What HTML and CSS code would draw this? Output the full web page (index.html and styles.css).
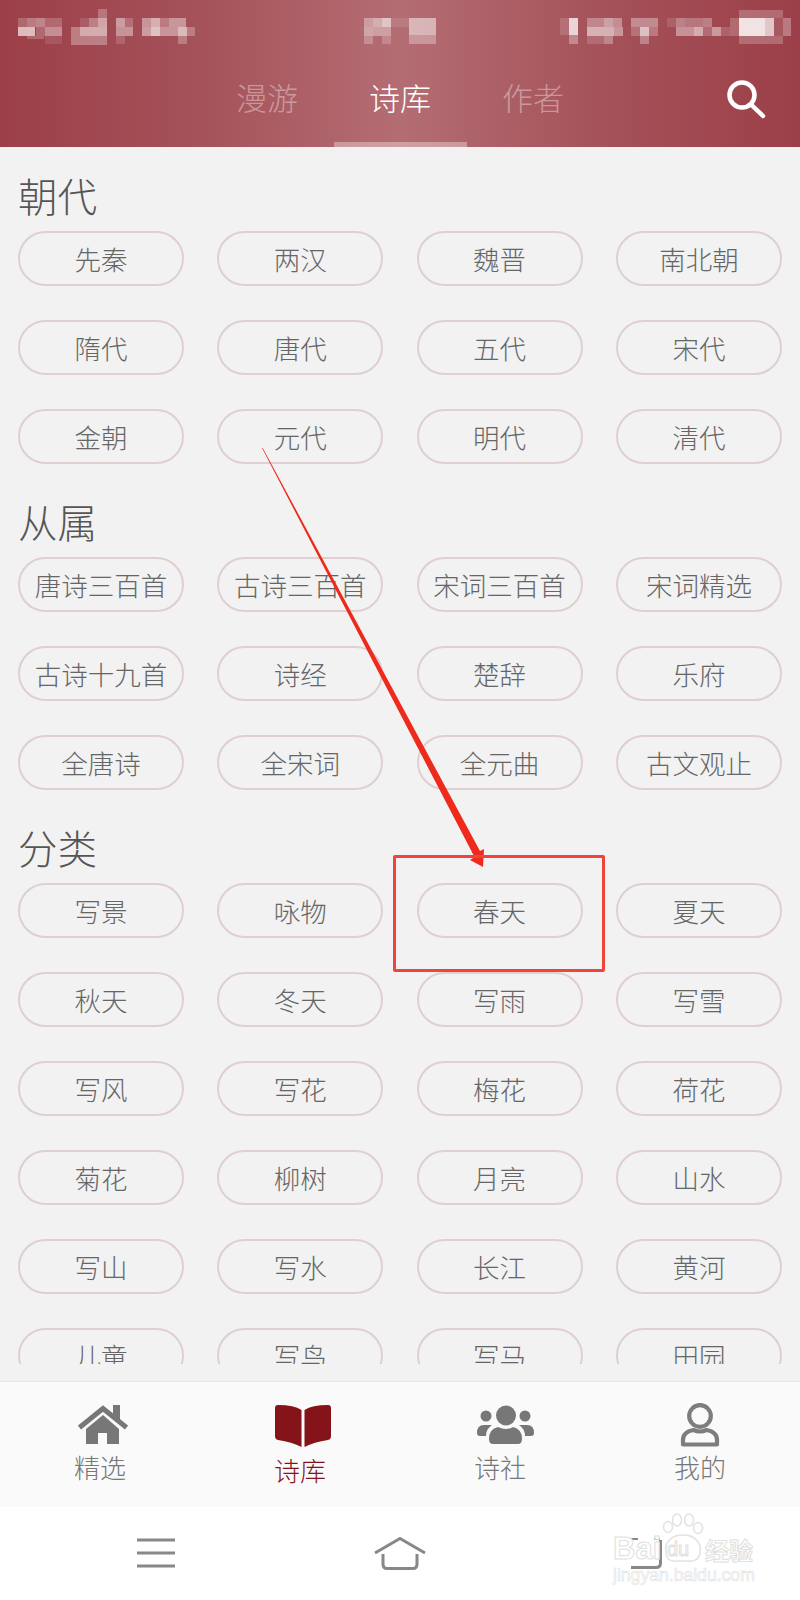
FILE: index.html
```html
<!DOCTYPE html>
<html>
<head>
    <meta charset="utf-8">
    <title>诗库</title>
    <link rel="stylesheet" href="styles.css">
</head>
<body>
    <div class="header">
        <!--状态栏（打码）-->
        <svg class="status" width="800" height="60" viewBox="0 0 800 60" fill="#fff">
            <rect x="18" y="18" width="9" height="9" opacity=".2"/><rect x="27" y="18" width="9" height="9" opacity=".3"/><rect x="36" y="18" width="9" height="9" opacity=".35"/><rect x="45" y="18" width="17" height="9" opacity=".2"/>
            <rect x="18" y="27" width="17" height="9" opacity=".65"/><rect x="36" y="27" width="9" height="9" opacity=".2"/><rect x="45" y="27" width="17" height="9" opacity=".4"/><rect x="27" y="36" width="17" height="3" opacity=".2"/><rect x="45" y="36" width="17" height="8" opacity=".1"/>
            <rect x="98" y="9" width="9" height="9" opacity=".25"/><rect x="89" y="18" width="9" height="9" opacity=".3"/><rect x="98" y="18" width="9" height="9" opacity=".5"/><rect x="80" y="18" width="9" height="9" opacity=".12"/>
            <rect x="71" y="27" width="9" height="9" opacity=".3"/><rect x="80" y="27" width="27" height="9" opacity=".55"/><rect x="71" y="36" width="36" height="9" opacity=".3"/>
            <rect x="116" y="18" width="9" height="9" opacity=".45"/><rect x="125" y="18" width="8" height="9" opacity=".2"/><rect x="116" y="27" width="17" height="9" opacity=".4"/><rect x="116" y="36" width="9" height="8" opacity=".15"/>
            <rect x="142" y="18" width="9" height="9" opacity=".4"/><rect x="151" y="18" width="9" height="9" opacity=".55"/><rect x="160" y="18" width="9" height="9" opacity=".25"/><rect x="169" y="18" width="17" height="9" opacity=".4"/>
            <rect x="142" y="27" width="9" height="9" opacity=".45"/><rect x="151" y="27" width="9" height="9" opacity=".65"/><rect x="160" y="27" width="18" height="9" opacity=".4"/><rect x="178" y="27" width="9" height="9" opacity=".6"/><rect x="187" y="27" width="8" height="9" opacity=".25"/><rect x="178" y="36" width="9" height="8" opacity=".25"/>

            <rect x="364" y="18" width="9" height="9" opacity=".35"/><rect x="373" y="18" width="9" height="9" opacity=".45"/><rect x="382" y="18" width="9" height="9" opacity=".6"/><rect x="364" y="27" width="9" height="9" opacity=".4"/><rect x="373" y="27" width="18" height="9" opacity=".35"/>
            <rect x="364" y="36" width="9" height="8" opacity=".25"/><rect x="382" y="36" width="9" height="8" opacity=".2"/><rect x="391" y="18" width="18" height="9" opacity=".1"/><rect x="409" y="18" width="27" height="17" opacity=".5"/><rect x="409" y="35" width="27" height="9" opacity=".3"/>

            <rect x="560" y="18" width="9" height="17" opacity=".15"/><rect x="569" y="18" width="9" height="17" opacity=".75"/><rect x="569" y="35" width="9" height="9" opacity=".3"/>
            <rect x="587" y="18" width="17" height="9" opacity=".3"/><rect x="604" y="18" width="9" height="9" opacity=".45"/><rect x="613" y="18" width="9" height="9" opacity=".35"/><rect x="587" y="27" width="27" height="9" opacity=".55"/><rect x="614" y="27" width="9" height="9" opacity=".4"/><rect x="587" y="36" width="17" height="8" opacity=".15"/><rect x="604" y="36" width="9" height="8" opacity=".3"/>
            <rect x="631" y="18" width="27" height="9" opacity=".35"/><rect x="631" y="27" width="9" height="9" opacity=".2"/><rect x="640" y="27" width="9" height="9" opacity=".65"/><rect x="649" y="27" width="9" height="9" opacity=".25"/><rect x="640" y="36" width="9" height="8" opacity=".3"/>
            <rect x="667" y="18" width="9" height="9" opacity=".12"/><rect x="676" y="18" width="9" height="9" opacity=".3"/><rect x="685" y="18" width="18" height="9" opacity=".25"/><rect x="703" y="18" width="9" height="9" opacity=".3"/>
            <rect x="676" y="27" width="18" height="9" opacity=".4"/><rect x="694" y="27" width="9" height="9" opacity=".55"/><rect x="703" y="27" width="9" height="9" opacity=".2"/><rect x="712" y="27" width="9" height="9" opacity=".45"/><rect x="721" y="27" width="9" height="9" opacity=".15"/>
            <rect x="730" y="18" width="9" height="18" opacity=".2"/><rect x="739" y="10" width="44" height="8" opacity=".22"/><rect x="739" y="18" width="26" height="18" opacity=".85"/><rect x="765" y="18" width="9" height="18" opacity=".7"/><rect x="774" y="18" width="9" height="18" opacity=".12"/><rect x="783" y="18" width="8" height="18" opacity=".3"/><rect x="739" y="36" width="44" height="8" opacity=".22"/>
        </svg>
        <div class="tabs">
            <div class="tab-list">
                <span class="tab">漫游</span>
                <span class="tab active">诗库</span>
                <span class="tab">作者</span>
            </div>
            <svg class="search" width="40" height="40" viewBox="0 0 40 40" fill="none" stroke="#fff" stroke-width="4.500">
                <circle cx="16" cy="15" r="12.500"/>
                <path d="M25 24.500 L37 36" stroke-linecap="round"/>
            </svg>
        </div>
    </div>

    <div class="content">
        <h2 class="title">朝代</h2>
        <div class="pills">
            <span class="pill">先秦</span><span class="pill">两汉</span><span class="pill">魏晋</span><span class="pill">南北朝</span>
            <span class="pill">隋代</span><span class="pill">唐代</span><span class="pill">五代</span><span class="pill">宋代</span>
            <span class="pill">金朝</span><span class="pill">元代</span><span class="pill">明代</span><span class="pill">清代</span>
        </div>
        <h2 class="title">从属</h2>
        <div class="pills">
            <span class="pill">唐诗三百首</span><span class="pill">古诗三百首</span><span class="pill">宋词三百首</span><span class="pill">宋词精选</span>
            <span class="pill">古诗十九首</span><span class="pill">诗经</span><span class="pill">楚辞</span><span class="pill">乐府</span>
            <span class="pill">全唐诗</span><span class="pill">全宋词</span><span class="pill">全元曲</span><span class="pill">古文观止</span>
        </div>
        <h2 class="title">分类</h2>
        <div class="pills">
            <span class="pill">写景</span><span class="pill">咏物</span><span class="pill">春天</span><span class="pill">夏天</span>
            <span class="pill">秋天</span><span class="pill">冬天</span><span class="pill">写雨</span><span class="pill">写雪</span>
            <span class="pill">写风</span><span class="pill">写花</span><span class="pill">梅花</span><span class="pill">荷花</span>
            <span class="pill">菊花</span><span class="pill">柳树</span><span class="pill">月亮</span><span class="pill">山水</span>
            <span class="pill">写山</span><span class="pill">写水</span><span class="pill">长江</span><span class="pill">黄河</span>
            <span class="pill">儿童</span><span class="pill">写鸟</span><span class="pill">写马</span><span class="pill">田园</span>
        </div>
    </div>

    <!--底部导航-->
    <div class="tabbar">
        <div class="nav-item">
            <svg class="nav-icon icon-home" width="50" height="44" viewBox="0 0 50 44" fill="#777">
                <rect x="35" y="0" width="7" height="14"/>
                <path d="M1.500 22.500 L25 3.500 L48.500 22.500" fill="none" stroke="#777" stroke-width="5"/>
                <path d="M8 24 L25 10 L41 24 V39 H29 V28 H20 V39 H8 Z"/>
            </svg>
            <span class="nav-label">精选</span>
        </div>
        <div class="nav-item active">
            <svg class="nav-icon icon-book" width="56" height="44" viewBox="0 0 56 44" fill="#85141a">
                <path d="M0 4 Q0 1 3 1 Q19 1 26.500 6 V43 Q17 38 3 36 Q0 35.500 0 32 Z"/>
                <path d="M56 4 Q56 1 53 1 Q37 1 29.500 6 V43 Q39 38 53 36 Q56 35.500 56 32 Z"/>
            </svg>
            <span class="nav-label">诗库</span>
        </div>
        <div class="nav-item">
            <svg class="nav-icon icon-people" width="57" height="44" viewBox="0 0 57 44" fill="#777">
                <circle cx="29" cy="10.500" r="10"/>
                <circle cx="9" cy="11" r="5.500"/>
                <circle cx="48" cy="11" r="5.500"/>
                <path d="M0 28 Q0 20 7 20 H15 Q9 24 9 31 H3 Q0 31 0 28 Z"/>
                <path d="M57 28 Q57 20 50 20 H42 Q48 24 48 31 H54 Q57 31 57 28 Z"/>
                <path d="M12 34 Q12 24 21 22 Q29 26 36 22 Q45 24 45 34 Q45 39 41 39 H16 Q12 39 12 34 Z"/>
            </svg>
            <span class="nav-label">诗社</span>
        </div>
        <div class="nav-item">
            <svg class="nav-icon icon-user" width="40" height="44" viewBox="0 0 40 44" fill="none" stroke="#7d7d7d" stroke-width="4.200">
                <circle cx="20" cy="13" r="10.800"/>
                <path d="M3 41.500 V37 C3 31 8 28 13.500 27 Q20 30 26.500 27 C32 28 37 31 37 37 V41.500 Z" stroke-linejoin="round"/>
            </svg>
            <span class="nav-label">我的</span>
        </div>
    </div>

    <!--系统导航-->
    <div class="sysnav">
        <svg width="38" height="32" viewBox="0 0 38 32" fill="none" stroke="#888" stroke-width="3">
            <path d="M0 3 H38 M0 16 H38 M0 29 H38"/>
        </svg>
        <svg class="sys-home" width="52" height="33" viewBox="0 0 52 33" fill="none" stroke="#888" stroke-width="3">
            <path d="M1 16 L26 1.500 L51 16"/>
            <path d="M9 17 V27 Q9 31.500 13 31.500 H39 Q43 31.500 43 27 V17"/>
        </svg>
        <svg width="32" height="32" viewBox="0 0 32 32" fill="none" stroke="#888" stroke-width="3">
            <path d="M30.500 3 V26 Q30.500 30.500 26 30.500 H1"/>
            <path d="M1 2 H8 M24 2 H30" stroke-width="2"/>
        </svg>
    </div>

    <!--图片上的标注-->
    <svg class="arrow" width="800" height="1600" viewBox="0 0 800 1600" fill="#ee2a1c">
        <path d="M262 448 L262.600 447.700 L480 851 L484 849 L483 867 L470 860 L474.500 857 Z"/>
    </svg>
    <div class="mark-box"></div>

    <!--水印-->
    <div class="watermark">
        <svg class="paw" width="44" height="52" viewBox="0 0 44 52" fill="#fff" stroke="#e2e2e2" stroke-width="1.500">
            <ellipse cx="7" cy="14" rx="4.500" ry="5.500"/>
            <ellipse cx="16" cy="7" rx="4.500" ry="6"/>
            <ellipse cx="28" cy="7" rx="4.500" ry="6"/>
            <ellipse cx="37" cy="15" rx="4.500" ry="5.500"/>
            <path d="M22 22 C34 22 41 30 39 40 C37 50 29 48 22 48 C14 48 6 50 5 40 C3 30 10 22 22 22 Z"/>
        </svg>
        <div class="wm-row">
            <span class="wm-bai">Bai</span>
            <span class="wm-du">du</span>
            <span class="wm-cn">经验</span>
        </div>
        <div class="wm-url">jingyan.baidu.com</div>
    </div>
</body>
</html>
```

FILE: styles.css
```css
body{
    margin:0;
    width:800px;
    height:1600px;
    overflow:hidden;
    position:relative;
    background-color:#f2f2f2;
    font-family:"Noto Sans CJK SC","Liberation Sans",sans-serif;
    font-weight:300;
}
/*顶部*/
.header{
    height:147px;
    display:flex;
    flex-direction:column;
    background:linear-gradient(90deg,#9c3f48 0%,#a5525a 25%,#b46d73 50%,#a5525a 75%,#9c3f48 100%);
}
.status{
    display:block;
    flex:none;
    filter:blur(.6px);
}
.tabs{
    flex:1;
    display:flex;
    justify-content:center;
    position:relative;
}
.tab-list{
    display:flex;
}
.tab{
    width:133px;
    box-sizing:border-box;
    padding-bottom:10px;
    display:flex;
    align-items:center;
    justify-content:center;
    font-size:31px;
    color:rgba(255,255,255,.38);
    border-bottom:5px solid transparent;
}
.tab.active{
    color:#fff;
    border-bottom-color:rgba(255,255,255,.35);
}
.search{
    position:absolute;
    right:34px;
    top:20px;
}
/*内容*/
.content{
    height:1217px;
    margin-bottom:18px;
    padding:22px 18px 0;
    box-sizing:border-box;
    overflow:hidden;
}
.title{
    margin:0 0 10px;
    height:52px;
    line-height:52px;
    font-size:39.500px;
    font-weight:300;
    color:#555;
}
.pills{
    display:grid;
    grid-template-columns:repeat(4,166px);
    column-gap:33.300px;
    row-gap:34px;
    margin-bottom:31px;
}
.pill{
    height:55px;
    box-sizing:border-box;
    border:2px solid #dfcfd0;
    border-radius:28px;
    display:flex;
    align-items:center;
    justify-content:center;
    font-size:26.500px;
    color:#666;
    white-space:nowrap;
}
/*底部导航*/
.tabbar{
    height:125px;
    display:flex;
    background-color:#fafafa;
    box-shadow:0 -1px 1px rgba(0,0,0,.04);
}
.nav-item{
    flex:1;
    display:flex;
    flex-direction:column;
    align-items:center;
    padding-top:23px;
    color:#777;
}
.nav-item.active{
    color:#85141a;
}
.nav-icon{
    display:block;
    flex:none;
}
.icon-home{
    margin-left:6px;
}
.icon-book{
    margin:-1px 0 1px 6px;
}
.icon-people{
    margin-left:10px;
}
.icon-user{
    margin:-2px 0 2px;
}
.nav-label{
    font-size:26px;
    line-height:36px;
}
.nav-item.active .nav-label{
    margin-top:3px;
}
.sysnav{
    height:93px;
    box-sizing:border-box;
    padding:30px 138px 0 137px;
    display:flex;
    justify-content:space-between;
    align-items:flex-start;
    background-color:#fff;
}
.sys-home{
    margin-right:5px;
}
/*标注*/
.arrow{
    position:absolute;
    left:0;
    top:0;
    pointer-events:none;
}
.mark-box{
    position:absolute;
    left:393px;
    top:855px;
    width:212px;
    height:117px;
    box-sizing:border-box;
    border:3px solid #f0443a;
    border-radius:2px;
}
/*水印*/
.watermark{
    position:absolute;
    left:613px;
    top:1510px;
    width:145px;
    height:78px;
    color:#fff;
    -webkit-text-stroke:1px #e0e0e0;
}
.paw{
    position:absolute;
    left:48px;
    top:3px;
}
.wm-row{
    position:absolute;
    left:0;
    top:22px;
    display:flex;
    align-items:center;
    height:34px;
    font-family:"Liberation Sans",sans-serif;
    font-weight:bold;
}
.wm-bai{
    font-size:31px;
    width:54px;
}
.wm-du{
    font-size:20px;
    width:38px;
    font-weight:normal;
}
.wm-cn{
    font-size:24px;
    font-family:"Noto Sans CJK SC",sans-serif;
    white-space:nowrap;
}
.wm-url{
    position:absolute;
    left:0;
    top:55px;
    font-family:"Liberation Sans",sans-serif;
    font-size:17.600px;
    white-space:nowrap;
    -webkit-text-stroke:.6px #e0e0e0;
}
```
